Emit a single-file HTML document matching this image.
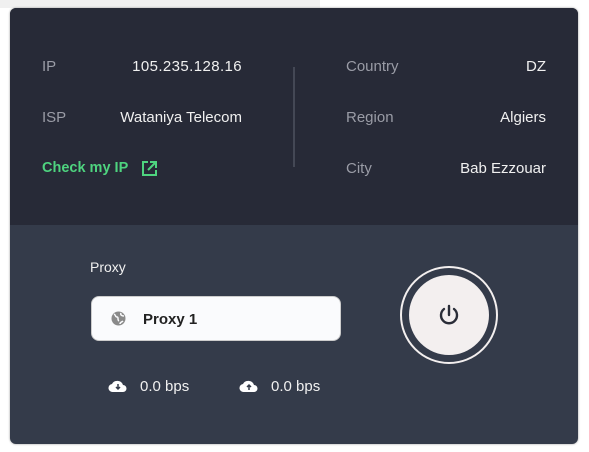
<!DOCTYPE html><html><head><style>
body{margin:0;width:589px;height:452px;background:#fff;font-family:"Liberation Sans",sans-serif;position:relative;overflow:hidden}
.strip{position:absolute;left:0;top:0;width:320px;height:8px;background:#f0f0f0}
.card{position:absolute;left:10px;top:8px;width:568px;height:436px;border-radius:6px;overflow:hidden;background:#343b4a;box-shadow:0 0 2px #999}
.top{position:absolute;left:0;top:0;width:568px;height:217px;background:#272a37}
.t{position:absolute;font-size:15px;color:#f0f0f0;white-space:nowrap}
.l{color:#9a9ca6}
.r{text-align:right}
</style></head><body>
<div class="strip"></div>
<div class="card">
<div class="top"></div>
<div class="t l" style="left:32px;top:50px">IP</div>
<div class="t r" style="right:336px;top:50px;letter-spacing:0.4px">105.235.128.16</div>
<div class="t l" style="left:32px;top:101px">ISP</div>
<div class="t r" style="right:336px;top:101px">Wataniya Telecom</div>
<div class="t" style="left:32px;top:152px;color:#4ed47f;font-weight:bold;font-size:14.5px">Check my IP</div>
<svg style="position:absolute;left:131px;top:152px" width="17" height="17" viewBox="0 0 17 17" fill="none" stroke="#4ed47f" stroke-width="2"><path d="M7 2H2v13h13v-5"/><path d="M9 2h6v6M15 2L7 10"/></svg>
<div style="position:absolute;left:283px;top:59px;width:2px;height:100px;background:#444855"></div>
<div class="t l" style="left:336px;top:50px">Country</div>
<div class="t r" style="right:32px;top:50px">DZ</div>
<div class="t l" style="left:336px;top:101px">Region</div>
<div class="t r" style="right:32px;top:101px">Algiers</div>
<div class="t l" style="left:336px;top:152px">City</div>
<div class="t r" style="right:32px;top:152px">Bab Ezzouar</div>
<div class="t" style="left:80px;top:251px;font-size:14px">Proxy</div>
<div style="position:absolute;left:81px;top:288px;width:248px;height:43px;background:#fafbfd;border-radius:8px;border:1px solid #ccc"></div>
<svg style="position:absolute;left:101px;top:303px" width="15" height="15" viewBox="0 0 15 15"><circle cx="7.5" cy="7.5" r="7" fill="#8a8a8a"/><path d="M3 3c2 1 1 3 3 3s0 3 2 4M10 2c-1 2 1 3 3 3M9 13c0-2 2-2 3-3" stroke="#fafbfd" stroke-width="1.5" fill="none"/></svg>
<div class="t" style="left:133px;top:303px;color:#222;font-weight:bold;font-size:15px">Proxy 1</div>
<div style="position:absolute;left:390px;top:258px;width:94px;height:94px;border-radius:50%;border:2px solid #f3efef"></div>
<div style="position:absolute;left:399px;top:267px;width:80px;height:80px;border-radius:50%;background:#f3efef"></div>
<svg style="position:absolute;left:426px;top:294px" width="26" height="26" viewBox="0 0 26 26" fill="none" stroke="#2a2d38" stroke-width="2.4" stroke-linecap="round"><path d="M13 4v9"/><path d="M8 7a8 8 0 1 0 10 0"/></svg>
<svg style="position:absolute;left:98px;top:371px" width="20" height="14" viewBox="0 0 20 14"><path d="M5 13a4 4 0 0 1-1-8 6 6 0 0 1 11 1 3.5 3.5 0 0 1 0 7z" fill="#fff"/><path d="M10 5v5M8 8l2 2 2-2" stroke="#343b4a" stroke-width="1.5" fill="none"/></svg>
<div class="t" style="left:130px;top:370px">0.0 bps</div>
<svg style="position:absolute;left:229px;top:371px" width="20" height="14" viewBox="0 0 20 14"><path d="M5 13a4 4 0 0 1-1-8 6 6 0 0 1 11 1 3.5 3.5 0 0 1 0 7z" fill="#fff"/><path d="M10 11V6M8 8l2-2 2 2" stroke="#343b4a" stroke-width="1.5" fill="none"/></svg>
<div class="t" style="left:261px;top:370px">0.0 bps</div>
</div>
</body></html>
